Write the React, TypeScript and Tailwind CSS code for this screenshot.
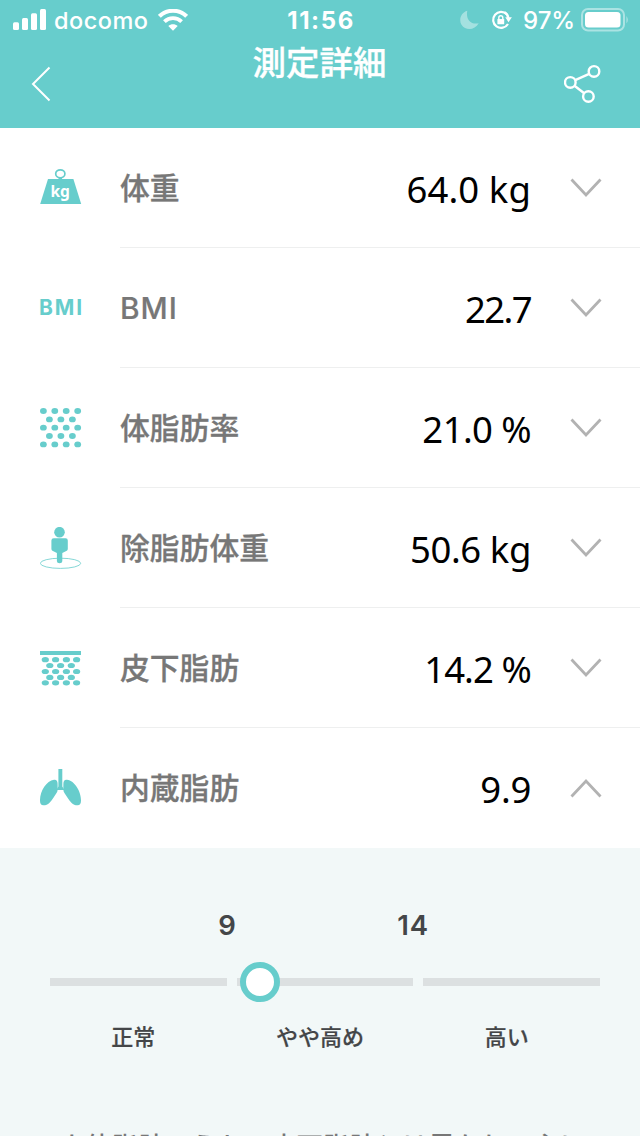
import React, { useState } from "react";

const WeightIcon = () => (
    <svg width="42" height="42" viewBox="0 0 42 42" fill="none">
        <ellipse cx="20.3" cy="6.8" rx="4.6" ry="4" stroke="#67cdcc" strokeWidth="1.7" />
        <path d="M18.6 10.5h3.4v2h-3.4z" fill="#67cdcc" />
        <path d="M8 12h25.4L41.2 37H.2z" fill="#67cdcc" />
        <text x="20.2" y="30" textAnchor="middle" fill="#fff" className="font-['Noto_Sans',sans-serif] text-[15.5px] font-bold">kg</text>
    </svg>
);

const BmiIcon = () => (
    <span className="-ml-px -mt-px font-['Inter',sans-serif] text-[21px] leading-none font-bold tracking-[1.9px] text-[#67cdcc]">BMI</span>
);

const FatIcon = () => (
    <svg width="42" height="42" viewBox="0 0 42 42" fill="#67cdcc">
        {[4, 12.4, 20.7, 29, 37.4].map((y, row) =>
            (row % 2 === 0 ? [3.4, 14.8, 26.2, 37.7] : [9.4, 20.9, 32.4]).map((x) => (
                <ellipse key={`${x}-${y}`} cx={x} cy={y} rx="3.4" ry="2.9" />
            ))
        )}
    </svg>
);

const BodyIcon = () => (
    <svg width="42" height="42" viewBox="0 0 42 42" fill="#67cdcc">
        <ellipse cx="20.5" cy="36.3" rx="20.2" ry="5.1" fill="none" stroke="#67cdcc" strokeWidth="0.8" />
        <circle cx="19.5" cy="5.2" r="5.3" />
        <path d="M13.8 11.2h11.8q2.2 0 2.2 2.2v8.4q0 1.3-1 1.9l-4.5 2.4v8.1q0 2-2.7 2t-2.7-2v-8.1l-4.5-2.4q-1-.6-1-1.9v-8.4q0-2.2 2.4-2.2z" />
    </svg>
);

const SkinIcon = () => (
    <svg width="42" height="42" viewBox="0 0 42 42" fill="#67cdcc">
        <path d="M0 4h41v4H0z" />
        {[12.7, 18.5, 24.5, 30.4, 35.8].map((y, row) =>
            (row % 2 === 0 ? [5.3, 15.6, 26.4, 36.6] : [9.8, 20.6, 31.3]).map((x) => (
                <ellipse key={`${x}-${y}`} cx={x} cy={y} rx="3.6" ry="2.6" />
            ))
        )}
    </svg>
);

const LungsIcon = () => (
    <svg width="42" height="42" viewBox="0 0 42 42" fill="#67cdcc">
        <path d="M18.4 2h3.9v17.5l2 3.5h-7.9l2-3.5z" />
        <path d="M14 12.7c2.8-.3 3.6 1.6 3.6 4.1l.1 5.5c0 3-2.1 5.2-4.1 8.2-2.8 4.2-5.2 7.8-10.1 7.8C.9 38.3 0 36.6 0 33.5-.2 24.8 6.3 13.5 14 12.7z" />
        <path transform="translate(41 0) scale(-1 1)" d="M14 12.7c2.8-.3 3.6 1.6 3.6 4.1l.1 5.5c0 3-2.1 5.2-4.1 8.2-2.8 4.2-5.2 7.8-10.1 7.8C.9 38.3 0 36.6 0 33.5-.2 24.8 6.3 13.5 14 12.7z" />
    </svg>
);

const rows = [
    { label: "体重", value: "64.0 kg", icon: <WeightIcon />, spacing: "tracking-[0.1px]" },
    { label: "BMI", value: "22.7", icon: <BmiIcon />, spacing: "tracking-[-1.6px]" },
    { label: "体脂肪率", value: "21.0 %", icon: <FatIcon />, spacing: "tracking-[-0.6px]" },
    { label: "除脂肪体重", value: "50.6 kg", icon: <BodyIcon />, spacing: "tracking-[-0.4px]" },
    { label: "皮下脂肪", value: "14.2 %", icon: <SkinIcon />, spacing: "tracking-[-0.9px]" },
    { label: "内蔵脂肪", value: "9.9", icon: <LungsIcon />, spacing: "tracking-[-0.3px]" },
];

const StatusBar = () => (
    <div className="flex h-10 items-center pl-[13px] pr-[11px] font-['Inter',sans-serif] text-white">
        <div className="flex flex-1 items-center">
            <svg width="33" height="22" viewBox="0 0 33 22" fill="currentColor">
                <rect x="0" y="13.2" width="6" height="7.8" rx="1.5" />
                <rect x="9" y="9" width="6" height="12" rx="1.5" />
                <rect x="18" y="4.2" width="6" height="16.8" rx="1.5" />
                <rect x="27" y="0" width="6" height="21" rx="1.5" />
            </svg>
            <span className="mt-0.5 ml-[8px] w-[94px] text-[23.5px] leading-none font-medium tracking-[0.5px]">docomo</span>
            <svg className="ml-[10px]" width="30" height="22" viewBox="0 0 30 22" fill="none" stroke="currentColor">
                <path d="M1.4 7.3C9-.2 21-.2 28.6 7.3" strokeWidth="4" />
                <path d="M6.4 12.6c4.8-4.7 12.4-4.7 17.2 0" strokeWidth="3.8" />
                <path d="M15 21.7l-4.7-4.6c2.6-2.4 6.8-2.4 9.4 0z" fill="currentColor" stroke="none" />
            </svg>
        </div>
        <span className="mt-0.5 text-[24px] leading-none font-bold tracking-[1.6px]">11:56</span>
        <div className="flex flex-1 items-center justify-end">
            <svg className="opacity-40" width="19" height="20" viewBox="0 0 19 20" fill="currentColor">
                <path d="M7.3.8C5.6 9.2 10.5 15 18.7 13.3 14.8 20.5 5.5 21 1.5 14.8-1.5 9.8 1 2.5 7.3.8z" />
            </svg>
            <svg className="ml-[12px]" width="22" height="20" viewBox="0 0 22 20" fill="none" stroke="currentColor" strokeWidth="2.2">
                <path d="M15.8 4.2A8 8 0 1 0 17 14" />
                <path d="M13.5 2.3a8 8 0 0 1 4 6" />
                <path d="M14.3 7.3h6.6l-3.4 5z" fill="currentColor" stroke="none" />
                <rect x="6.4" y="9" width="6.8" height="5.3" rx=".6" fill="currentColor" stroke="none" />
                <path d="M7.8 9.5V7.7a2 2 0 0 1 4 0v1.8" strokeWidth="1.4" />
            </svg>
            <span className="mt-0.5 ml-[10px] text-[24px] leading-none font-medium tracking-[-0.1px]">97%</span>
            <svg className="ml-[6px]" width="48" height="24" viewBox="0 0 48 24" fill="none">
                <rect x="1" y="1" width="42" height="21.5" rx="6" stroke="currentColor" strokeWidth="2" opacity=".45" />
                <rect x="4" y="4" width="35.5" height="15.5" rx="3.5" fill="currentColor" />
                <path d="M45.5 8q2.5 3.8 0 7.5z" fill="currentColor" opacity=".5" />
            </svg>
        </div>
    </div>
);

export default function App() {
    const [open, setOpen] = useState<string | null>("内蔵脂肪");

    return (
        <div className="h-[1136px] w-[640px] overflow-hidden bg-white font-['Inter','Noto_Sans_CJK_JP',sans-serif]" lang="ja">
            <header className="h-32 bg-[#67cdcc] text-white">
                <StatusBar />
                <div className="flex h-[88px] items-start justify-between pl-[31px] pr-[39px]">
                    <svg className="mt-[26px]" width="20" height="36" viewBox="0 0 20 36" fill="none" stroke="currentColor" strokeWidth="2">
                        <path d="M18.5 1.5L2 18l16.5 16.5" />
                    </svg>
                    <h1 className="mt-[2px] ml-[24px] font-['Noto_Sans_CJK_JP',sans-serif] text-[33.5px] leading-[38px] font-medium [-webkit-text-stroke:0.3px]">測定詳細</h1>
                    <svg className="mt-[24px]" width="37" height="40" viewBox="0 0 37 40" fill="none" stroke="currentColor" strokeWidth="2.4">
                        <circle cx="6.3" cy="18.4" r="5.3" />
                        <circle cx="30" cy="7.4" r="5.3" />
                        <circle cx="24.4" cy="32.5" r="5.3" />
                        <path d="M11.2 16.1L25.2 9.8M10.5 21.7L20.2 29.2" />
                    </svg>
                </div>
            </header>

            <main>
                {rows.map((row, i) => (
                    <div key={row.label} onClick={() => setOpen(open === row.label ? null : row.label)} className="flex h-30 cursor-pointer pl-10">
                        <div className="flex w-20 items-center">{row.icon}</div>
                        <div className={`flex flex-1 items-center border-b pr-[38px] ${i === rows.length - 1 ? 'border-white' : 'border-[#eeefef]'}`}>
                            <span className={`flex-1 text-[29.8px] leading-[40px] font-medium text-[#777777] ${row.label === 'BMI' ? 'tracking-[1px] [-webkit-text-stroke:0.2px]' : '[-webkit-text-stroke:0.3px]'}`}>{row.label}</span>
                            <span className={`mt-[3px] font-['Noto_Sans',sans-serif] text-[36.5px] leading-[48px] text-black ${row.spacing}`}>{row.value}</span>
                            <svg className={`ml-[39px] mt-px ${open === row.label ? 'rotate-180' : ''}`} width="32" height="20" viewBox="0 0 32 20" fill="none" stroke="#b2b2b2" strokeWidth="2.8">
                                <path d="M1.5 1.5L16 17 30.5 1.5" />
                            </svg>
                        </div>
                    </div>
                ))}

                <section className="h-72 overflow-hidden bg-[#f2f8f8] pt-[59px] text-[#444648]">
                    <div className="flex pl-[167px] text-center text-[27.5px] leading-[36px] font-semibold">
                        <span className="w-[120px]">9</span>
                        <span className="ml-[66px] w-[120px] tracking-[0.8px]">14</span>
                    </div>
                    <div className="relative mt-[35px] mr-[40px] ml-[50px] grid grid-cols-3 gap-[10px]">
                        <div className="h-2 bg-[#dce0e1]"></div>
                        <div className="h-2 bg-[#dce0e1]"></div>
                        <div className="h-2 bg-[#dce0e1]"></div>
                        <div className="absolute -top-4 left-[190px] h-10 w-10 rounded-full border-[6px] border-[#67cdcc] bg-white"></div>
                    </div>
                    <div className="mx-10 mt-[35px] grid grid-cols-3 text-center text-[22px] leading-[32px] font-medium [-webkit-text-stroke:0.2px]">
                        <span>正常</span>
                        <span>やや高め</span>
                        <span>高い</span>
                    </div>
                    <p className="mt-[72px] ml-[59px] font-['Noto_Sans_CJK_JP',sans-serif] text-[26.4px] leading-[40px] font-medium whitespace-nowrap text-[#777777]">
                        人体脂肪のうち、皮下脂肪とは異なり、主に
                    </p>
                </section>
            </main>
        </div>
    );
}
